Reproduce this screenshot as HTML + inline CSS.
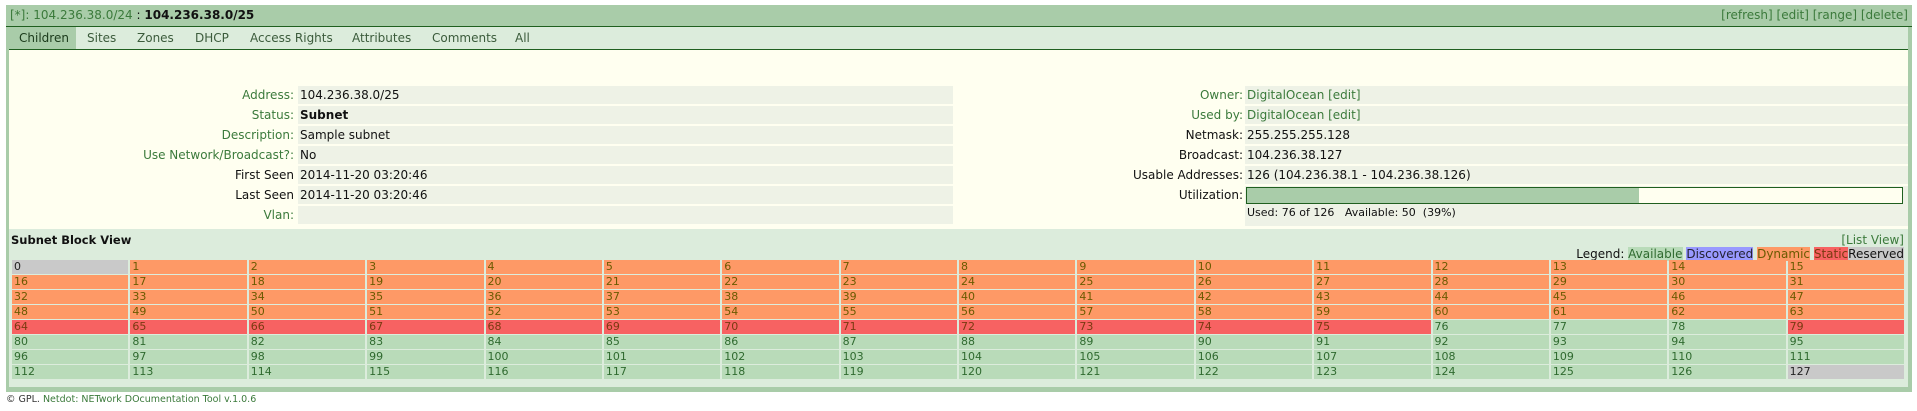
<!DOCTYPE html>
<html><head><meta charset="utf-8"><style>
*{margin:0;padding:0;box-sizing:border-box}
body{width:1917px;height:411px;background:#fff;font-family:"DejaVu Sans","Liberation Sans",sans-serif;font-size:12px;color:#111;position:relative;overflow:hidden}
.a{position:absolute}
.g{color:#3b7a3b}
#panel{left:6px;top:5px;width:1906px;height:387px;background:#a9cca9}
#inner{left:9px;top:27px;width:1899px;height:360px;background:#fffff0}
#hdr{left:6px;top:5px;width:1906px;height:22px;background:#a9cca9;border-bottom:1px solid #1f5f1f}
#tabs{left:9px;top:27px;width:1899px;height:23px;background:#dcecdc;border-bottom:1px solid #1f5f1f}
.tab{position:absolute;top:0;height:22px;line-height:22px;color:#3b5b3b}
.lbl{position:absolute;text-align:right;height:18px;line-height:18px}
.val{position:absolute;height:18px;line-height:18px;background:#eef2e6;padding-left:2px;white-space:nowrap}
#grid{left:12px;top:260px;width:1892px;display:grid;grid-template-columns:repeat(16,1fr);column-gap:2px;row-gap:1px;font-size:11px}
#grid div{height:14px;line-height:14px;padding-left:2px}
.d{background:#fe9966;color:#6b5a00}
.s{background:#f76262;color:#7a3a10}
.v{background:#b9dbb9;color:#2f6a2f}
.r{background:#c9c9c9;color:#222}
</style></head><body>
<div id="panel" class="a"></div>
<div id="inner" class="a"></div>
<div id="hdr" class="a"><span class="a" style="left:4px;top:3px;white-space:nowrap"><span class="g">[*]: 104.236.38.0/24</span> : <b>104.236.38.0/25</b></span>
<span class="a g" style="right:4px;top:3px">[refresh] [edit] [range] [delete]</span></div>
<div id="tabs" class="a">
<div class="tab" style="left:0;width:67px;background:#a9cca9;color:#1a3a1a;padding-left:10px">Children</div>
<div class="tab" style="left:78px">Sites</div>
<div class="tab" style="left:128px">Zones</div>
<div class="tab" style="left:186px">DHCP</div>
<div class="tab" style="left:241px">Access Rights</div>
<div class="tab" style="left:343px">Attributes</div>
<div class="tab" style="left:423px">Comments</div>
<div class="tab" style="left:506px">All</div>
</div>

<div class="lbl g" style="left:0;width:294px;top:86px">Address:</div><div class="val" style="left:298px;width:655px;top:86px">104.236.38.0/25</div>
<div class="lbl g" style="left:0;width:294px;top:106px">Status:</div><div class="val" style="left:298px;width:655px;top:106px"><b>Subnet</b></div>
<div class="lbl g" style="left:0;width:294px;top:126px">Description:</div><div class="val" style="left:298px;width:655px;top:126px">Sample subnet</div>
<div class="lbl g" style="left:0;width:294px;top:146px">Use Network/Broadcast?:</div><div class="val" style="left:298px;width:655px;top:146px">No</div>
<div class="lbl" style="left:0;width:294px;top:166px">First Seen</div><div class="val" style="left:298px;width:655px;top:166px">2014-11-20 03:20:46</div>
<div class="lbl" style="left:0;width:294px;top:186px">Last Seen</div><div class="val" style="left:298px;width:655px;top:186px">2014-11-20 03:20:46</div>
<div class="lbl g" style="left:0;width:294px;top:206px">Vlan:</div><div class="val" style="left:298px;width:655px;top:206px"></div>

<div class="lbl g" style="left:1000px;width:243px;top:86px">Owner:</div><div class="val g" style="left:1245px;width:663px;top:86px">DigitalOcean [edit]</div>
<div class="lbl g" style="left:1000px;width:243px;top:106px">Used by:</div><div class="val g" style="left:1245px;width:663px;top:106px">DigitalOcean [edit]</div>
<div class="lbl" style="left:1000px;width:243px;top:126px">Netmask:</div><div class="val" style="left:1245px;width:663px;top:126px">255.255.255.128</div>
<div class="lbl" style="left:1000px;width:243px;top:146px">Broadcast:</div><div class="val" style="left:1245px;width:663px;top:146px">104.236.38.127</div>
<div class="lbl" style="left:1000px;width:243px;top:166px">Usable Addresses:</div><div class="val" style="left:1245px;width:663px;top:166px">126 (104.236.38.1 - 104.236.38.126)</div>
<div class="lbl" style="left:1000px;width:243px;top:186px">Utilization:</div><div class="val" style="left:1245px;width:663px;top:186px;height:40px"></div>
<div class="a" style="left:1246px;top:187px;width:657px;height:17px;border:1px solid #1f5f1f;background:#fffff0"><div style="width:392px;height:15px;background:#a9cca9"></div></div>
<div class="a" style="left:1247px;top:206px;font-size:11px">Used: 76 of 126 &nbsp; Available: 50 &nbsp;(39%)</div>

<div class="a" style="left:9px;top:229px;width:1899px;height:158px;background:#dcecdc"></div>
<div class="a" style="left:11px;top:233px;font-weight:bold;font-size:11.5px">Subnet Block View</div>
<div class="a g" style="right:13px;top:233px">[List View]</div>
<div class="a" style="right:13px;top:247px">Legend: <span style="background:#b9dbb9;color:#2f6a2f">Available</span> <span style="background:#9999ff;color:#223">Discovered</span> <span style="background:#fe9966;color:#6b5a00">Dynamic</span> <span style="background:#f76262;color:#7a3a10">Static</span><span style="background:#c9c9c9">Reserved</span></div>

<div id="grid" class="a">
<div class="r">0</div><div class="d">1</div><div class="d">2</div><div class="d">3</div><div class="d">4</div><div class="d">5</div><div class="d">6</div><div class="d">7</div><div class="d">8</div><div class="d">9</div><div class="d">10</div><div class="d">11</div><div class="d">12</div><div class="d">13</div><div class="d">14</div><div class="d">15</div>
<div class="d">16</div><div class="d">17</div><div class="d">18</div><div class="d">19</div><div class="d">20</div><div class="d">21</div><div class="d">22</div><div class="d">23</div><div class="d">24</div><div class="d">25</div><div class="d">26</div><div class="d">27</div><div class="d">28</div><div class="d">29</div><div class="d">30</div><div class="d">31</div>
<div class="d">32</div><div class="d">33</div><div class="d">34</div><div class="d">35</div><div class="d">36</div><div class="d">37</div><div class="d">38</div><div class="d">39</div><div class="d">40</div><div class="d">41</div><div class="d">42</div><div class="d">43</div><div class="d">44</div><div class="d">45</div><div class="d">46</div><div class="d">47</div>
<div class="d">48</div><div class="d">49</div><div class="d">50</div><div class="d">51</div><div class="d">52</div><div class="d">53</div><div class="d">54</div><div class="d">55</div><div class="d">56</div><div class="d">57</div><div class="d">58</div><div class="d">59</div><div class="d">60</div><div class="d">61</div><div class="d">62</div><div class="d">63</div>
<div class="s">64</div><div class="s">65</div><div class="s">66</div><div class="s">67</div><div class="s">68</div><div class="s">69</div><div class="s">70</div><div class="s">71</div><div class="s">72</div><div class="s">73</div><div class="s">74</div><div class="s">75</div><div class="v">76</div><div class="v">77</div><div class="v">78</div><div class="s">79</div>
<div class="v">80</div><div class="v">81</div><div class="v">82</div><div class="v">83</div><div class="v">84</div><div class="v">85</div><div class="v">86</div><div class="v">87</div><div class="v">88</div><div class="v">89</div><div class="v">90</div><div class="v">91</div><div class="v">92</div><div class="v">93</div><div class="v">94</div><div class="v">95</div>
<div class="v">96</div><div class="v">97</div><div class="v">98</div><div class="v">99</div><div class="v">100</div><div class="v">101</div><div class="v">102</div><div class="v">103</div><div class="v">104</div><div class="v">105</div><div class="v">106</div><div class="v">107</div><div class="v">108</div><div class="v">109</div><div class="v">110</div><div class="v">111</div>
<div class="v">112</div><div class="v">113</div><div class="v">114</div><div class="v">115</div><div class="v">116</div><div class="v">117</div><div class="v">118</div><div class="v">119</div><div class="v">120</div><div class="v">121</div><div class="v">122</div><div class="v">123</div><div class="v">124</div><div class="v">125</div><div class="v">126</div><div class="r">127</div>
</div>

<div class="a" style="left:6px;top:394px;font-size:9.5px;color:#333">© GPL. <span class="g">Netdot: NETwork DOcumentation Tool v.1.0.6</span></div>
</body></html>
